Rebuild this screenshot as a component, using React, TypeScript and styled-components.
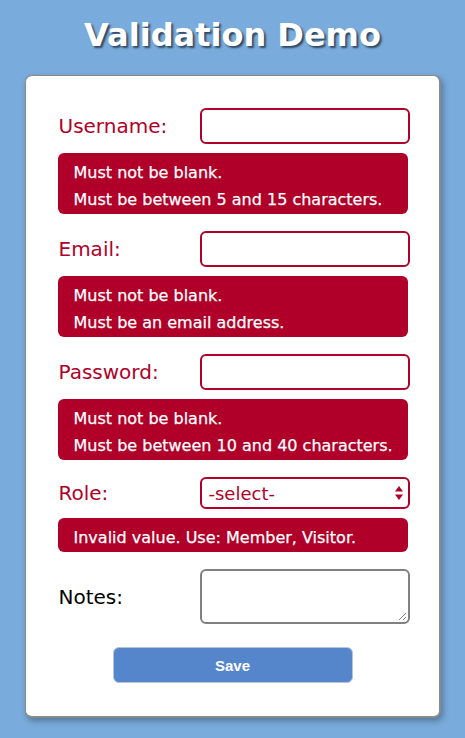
import React from "react";
import styled, { createGlobalStyle } from "styled-components";

const errorRed = "#b00029";

type Field = {
  label: string;
  kind: "input" | "select" | "textarea";
  errors: string[];
};

const fields: Field[] = [
  {
    label: "Username:",
    kind: "input",
    errors: ["Must not be blank.", "Must be between 5 and 15 characters."],
  },
  {
    label: "Email:",
    kind: "input",
    errors: ["Must not be blank.", "Must be an email address."],
  },
  {
    label: "Password:",
    kind: "input",
    errors: ["Must not be blank.", "Must be between 10 and 40 characters."],
  },
  {
    label: "Role:",
    kind: "select",
    errors: ["Invalid value. Use: Member, Visitor."],
  },
  { label: "Notes:", kind: "textarea", errors: [] },
];

export default function App() {
  return (
    <>
      <GlobalStyle />
      <Page>
        <Title>Validation Demo</Title>
        <Card>
          {fields.map((field) => {
            const invalid = field.errors.length > 0;
            return (
              <FieldGroup key={field.label}>
                <Row>
                  <Label $invalid={invalid}>{field.label}</Label>
                  {field.kind === "input" && <TextInput $invalid={invalid} />}
                  {field.kind === "select" && (
                    <SelectBox>
                      <span>-select-</span>
                      <Arrows viewBox="0 0 10 16">
                        <path d="M5 1 L9 6.5 L1 6.5 Z" />
                        <path d="M5 15 L9 9.5 L1 9.5 Z" />
                      </Arrows>
                    </SelectBox>
                  )}
                  {field.kind === "textarea" && <NotesArea />}
                </Row>
                {invalid && (
                  <ErrorBox>
                    {field.errors.map((err) => (
                      <div key={err}>{err}</div>
                    ))}
                  </ErrorBox>
                )}
              </FieldGroup>
            );
          })}
          <SaveButton>Save</SaveButton>
        </Card>
      </Page>
    </>
  );
}

const GlobalStyle = createGlobalStyle`
  html, body {
    margin: 0;
    padding: 0;
    background: #79acdc;
  }
  body {
    font-family: "DejaVu Sans", Verdana, sans-serif;
  }
`;

const Page = styled.div`
  width: 465px;
  height: 738px;
  background: #79acdc;
  display: flex;
  flex-direction: column;
  align-items: center;
  box-sizing: border-box;
  padding-top: 14px;
`;

const Title = styled.h1`
  margin: 0;
  height: 61px;
  font-family: "DejaVu Sans", Verdana, sans-serif;
  font-weight: bold;
  font-size: 32px;
  line-height: 42px;
  color: #ffffff;
  text-shadow: 2px 2px 2px rgba(30, 45, 70, 0.8);
`;

const Card = styled.div`
  width: 416px;
  box-sizing: border-box;
  background: #ffffff;
  border: 1px solid #8a8a8a;
  border-right-width: 2px;
  border-bottom-width: 2px;
  border-radius: 7px;
  box-shadow: 2px 3px 6px rgba(40, 50, 70, 0.45);
  padding: 32px 31px 33px 32px;
  display: flex;
  flex-direction: column;
`;

const FieldGroup = styled.div`
  display: flex;
  flex-direction: column;
  gap: 9px;
  margin-bottom: 17px;
`;

const Row = styled.div`
  display: grid;
  grid-template-columns: 142px 210px;
  align-items: center;
`;

const Label = styled.label<{ $invalid: boolean }>`
  font-size: 20px;
  line-height: 24px;
  padding-left: 1px;
  color: ${({ $invalid }) => ($invalid ? errorRed : "#000000")};
`;

const TextInput = styled.div<{ $invalid: boolean }>`
  height: 36px;
  box-sizing: border-box;
  border: 2px solid ${({ $invalid }) => ($invalid ? errorRed : "#808080")};
  border-radius: 6px;
  background: #ffffff;
`;

const SelectBox = styled.div`
  height: 32px;
  box-sizing: border-box;
  border: 2px solid ${errorRed};
  border-radius: 6px;
  display: flex;
  align-items: center;
  justify-content: space-between;
  padding: 0 4px 0 7px;
  color: ${errorRed};
  font-size: 18px;
`;

const Arrows = styled.svg`
  width: 10px;
  height: 18px;
  fill: ${errorRed};
`;

const NotesArea = styled.div`
  position: relative;
  height: 55px;
  box-sizing: border-box;
  border: 2px solid #808080;
  border-radius: 6px;

  &::after {
    content: "";
    position: absolute;
    right: 2px;
    bottom: 2px;
    width: 7px;
    height: 7px;
    background: linear-gradient(
      135deg,
      transparent 45%,
      #888 45%,
      #888 55%,
      transparent 55%,
      transparent 75%,
      #888 75%,
      #888 85%,
      transparent 85%
    );
  }
`;

const ErrorBox = styled.div`
  background: ${errorRed};
  color: #ffffff;
  border-radius: 6px;
  padding: 6px 10px 1px 16px;
  font-size: 16px;
  line-height: 27px;
  -webkit-text-stroke: 0.25px #ffffff;
`;

const SaveButton = styled.button`
  align-self: center;
  margin-top: 6px;
  width: 240px;
  height: 36px;
  border: 1px solid #b5c4d8;
  border-radius: 6px;
  background: #5585ca;
  color: #ffffff;
  font-family: "Liberation Sans", Arial, sans-serif;
  font-weight: bold;
  font-size: 15px;
`;
